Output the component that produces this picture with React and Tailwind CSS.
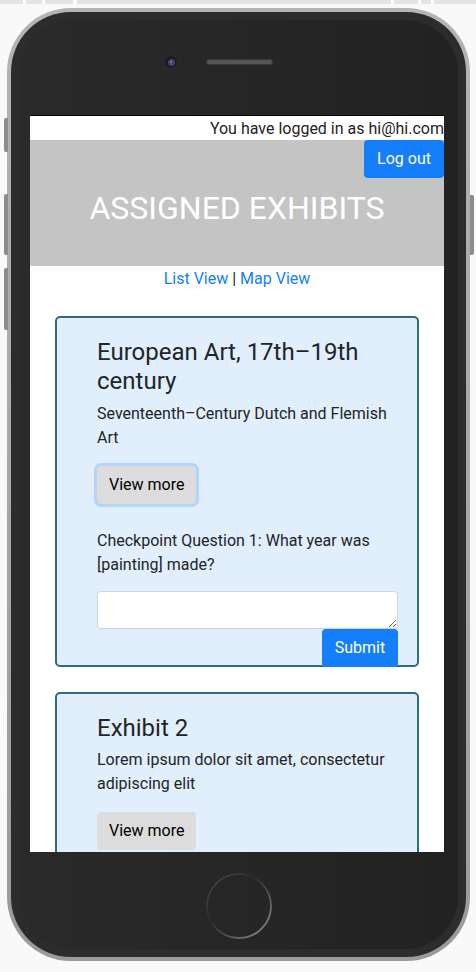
import React from 'react';

function HomeButton() {
  return (
    <svg width="68" height="68" viewBox="0 0 68 68" className="mx-auto mt-[20px] block">
      <defs>
        <linearGradient id="hb" x1="0" y1="0" x2="1" y2="1">
          <stop offset="0" stopColor="#4a4a4a" />
          <stop offset="0.4" stopColor="#2a2a2a" />
          <stop offset="1" stopColor="#939393" />
        </linearGradient>
      </defs>
      <circle cx="34" cy="34" r="32" fill="none" stroke="url(#hb)" strokeWidth="1.8" />
    </svg>
  );
}

function ExhibitCard({ title, text, focused, children }) {
  return (
    <div className="mx-[25px] border-2 border-[#306c7a] rounded-[5px] bg-[#e1eefb] pl-[40px] pr-[19px] pt-[20px]">
      <h3 className="text-[24px] leading-[28.8px] font-normal text-[#212529] mb-[6px]">{title}</h3>
      <p className="text-[16px] leading-[24px] text-[#212529] mb-[16px]">{text}</p>
      <button
        className={
          'h-[38px] px-[12px] rounded-[4px] bg-[#dcdcdc] text-[16px] text-black ' +
          (focused ? 'ring-[3px] ring-[#b3d5fb]' : '')
        }
      >
        View more
      </button>
      {children}
    </div>
  );
}

export default function App() {
  return (
    <div className="min-h-screen bg-[#f9f9f9] overflow-hidden" style={{ fontFamily: 'Roboto, "Liberation Sans", sans-serif' }}>
      {/* top strip */}
      <div className="h-[4px] bg-[#e4e4e4] flex">
        <div className="ml-[23px] w-[3px] bg-white" />
        <div className="ml-[16px] w-[3px] bg-white" />
        <div className="ml-[28px] w-[4px] bg-white" />
        <div className="ml-[314px] w-[3px] bg-white" />
        <div className="ml-[24px] w-[3px] bg-white" />
        <div className="ml-[10px] w-[3px] bg-white" />
      </div>

      {/* phone */}
      <div className="relative mt-[4px] ml-[7px] w-[463px] h-[953px] rounded-[64px] bg-gradient-to-b from-[#b4b4b4] to-[#9a9a9a] p-[4px]">
        {/* side buttons */}
        <div className="absolute left-[-3px] top-[110px] w-[4px] h-[34px] rounded-l-[2px] bg-[#8c8c8c]" />
        <div className="absolute left-[-3px] top-[186px] w-[4px] h-[61px] rounded-l-[2px] bg-[#8c8c8c]" />
        <div className="absolute left-[-3px] top-[260px] w-[4px] h-[62px] rounded-l-[2px] bg-[#8c8c8c]" />
        <div className="absolute right-[-4px] top-[187px] w-[4px] h-[60px] rounded-r-[2px] bg-[#8c8c8c]" />

        <div className="h-full rounded-[60px] bg-[#2c2c2c] p-[8px]">
          <div className="h-full rounded-[52px] bg-gradient-to-r from-[#2a2a2a] to-[#222222] flex flex-col">
            {/* camera + speaker */}
            <div className="mt-[35px] ml-[145px] flex items-center gap-[28px] h-[14px]">
              <div className="w-[14px] h-[14px] rounded-full bg-[#1a1a20] border border-[#2f2f36] flex items-center justify-center">
                <div className="w-[7px] h-[7px] rounded-full bg-[#4a3f72] flex items-center justify-center">
                  <div className="w-[2px] h-[2px] rounded-full bg-[#8a80b0]" />
                </div>
              </div>
              <div className="w-[67px] h-[6px] rounded-full bg-[#555555] border border-[#3a3a3a]" />
            </div>

            {/* screen */}
            <div className="mt-[46px] ml-[11px] w-[414px] h-[737px] bg-white overflow-hidden border-t border-black">
              <div className="h-[24px] text-right text-[16px] leading-[25px] text-[#212529]">
                You have logged in as hi@hi.com
              </div>
              <div className="h-[126px] bg-[#c4c4c4]">
                <div className="flex justify-end">
                  <button className="h-[38px] w-[80px] rounded-[4px] bg-[#157ffb] text-white text-[16px]">Log out</button>
                </div>
                <h1 className="mt-[11px] text-center text-white text-[32px] leading-[38.4px] font-normal">
                  ASSIGNED EXHIBITS
                </h1>
              </div>
              <div className="text-center text-[16px] leading-[25px] text-[#212529]">
                <a className="text-[#157ffb]">List View</a> | <a className="text-[#157ffb]">Map View</a>
              </div>

              <div className="mt-[25px]">
                <ExhibitCard
                  title="European Art, 17th–19th century"
                  text="Seventeenth–Century Dutch and Flemish Art"
                  focused
                >
                  <p className="mt-[25px] mb-[14px] text-[16px] leading-[24px] text-[#212529]">
                    Checkpoint Question 1: What year was [painting] made?
                  </p>
                  <textarea className="block w-full h-[38px] bg-white border border-[#ced4da] rounded-[4px]" />
                  <div className="flex justify-end">
                    <button className="relative mb-[-2px] h-[38px] w-[76px] rounded-[4px] bg-[#157ffb] text-white text-[16px]">
                      Submit
                    </button>
                  </div>
                </ExhibitCard>
              </div>

              <div className="mt-[25px]">
                <ExhibitCard title="Exhibit 2" text="Lorem ipsum dolor sit amet, consectetur adipiscing elit">
                  <div className="h-[40px]" />
                </ExhibitCard>
              </div>
            </div>

            <HomeButton />
          </div>
        </div>
      </div>
    </div>
  );
}
